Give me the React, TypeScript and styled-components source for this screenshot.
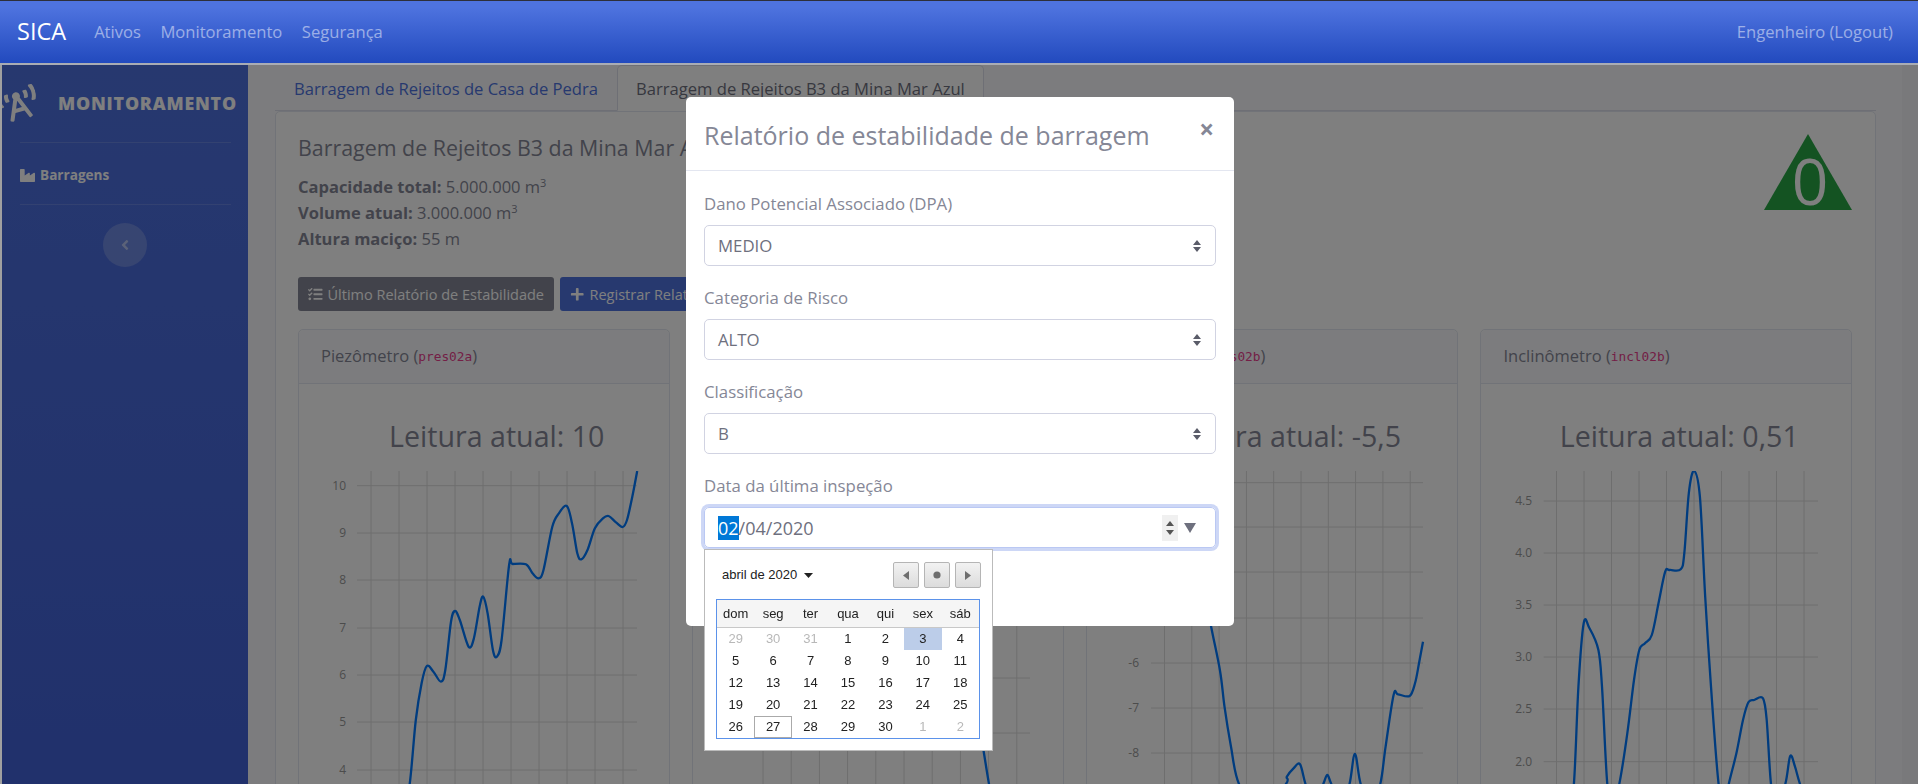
import React from "react";
import styled, { createGlobalStyle } from "styled-components";
import { FaAngleLeft, FaBroadcastTower, FaIndustry, FaPlus, FaTasks } from "react-icons/fa";

type Point = [number, number];

type ChartData = {
	lines: { y: number; label?: string }[];
	labelRight: number;
	lineStart: number;
	lineEnd: number;
	gridStart: number;
	gridStep: number;
	points: Point[];
};

type SensorData = {
	name: string;
	code: string;
	reading: string;
	chart: ChartData;
};

const sensors: SensorData[] = [
	{
		name: "Piezômetro",
		code: "pres02a",
		reading: "10",
		chart: {
			lines: [
				{ y: 14.7, label: "10" },
				{ y: 62, label: "9" },
				{ y: 109, label: "8" },
				{ y: 157, label: "7" },
				{ y: 204, label: "6" },
				{ y: 251, label: "5" },
				{ y: 299, label: "4" },
			],
			labelRight: 48,
			lineStart: 59,
			lineEnd: 339,
			gridStart: 73,
			gridStep: 28,
			points: [
				[105, 340], [111.7, 313], [117.8, 249], [123.6, 212.3], [128.8, 195], [135.4, 200.7], [142.9, 210.7],
				[147.3, 199], [153, 150.7], [157, 140], [161.8, 149], [170.6, 175.7], [175.9, 167.3], [181.6, 135.7],
				[185.2, 125.7], [189.6, 142.3], [194.9, 179], [198.8, 185.7], [203.6, 169], [211.1, 94], [214.6, 93],
				[227.9, 93.3], [234.5, 102.3], [240.6, 107.3], [245.5, 99], [254.3, 55.7], [260.9, 42.3], [268.8, 35],
				[274, 52.3], [279.3, 82.3], [283.3, 88.3], [289.5, 79], [296.9, 57.3], [304.9, 47.3], [310.6, 45],
				[318, 51.3], [324.7, 56], [329, 49], [334.3, 25.7], [339.2, 0],
			],
		},
	},
	{
		name: "Piezômetro",
		code: "pres02c",
		reading: "2,5",
		chart: {
			lines: [
				{ y: 42, label: "3" },
				{ y: 97, label: "2,5" },
				{ y: 152, label: "2" },
				{ y: 207, label: "1,5" },
				{ y: 262, label: "1" },
				{ y: 317 },
			],
			labelRight: 48,
			lineStart: 59,
			lineEnd: 338,
			gridStart: 71,
			gridStep: 28.2,
			points: [[270, 120], [285, 240], [291.6, 280], [297, 313], [303, 345]],
		},
	},
	{
		name: "Piezômetro",
		code: "pres02b",
		reading: "-5,5",
		chart: {
			lines: [
				{ y: 11.7, label: "-2" },
				{ y: 56, label: "-3" },
				{ y: 101, label: "-4" },
				{ y: 147, label: "-5" },
				{ y: 192, label: "-6" },
				{ y: 237, label: "-7" },
				{ y: 282, label: "-8" },
			],
			labelRight: 53,
			lineStart: 65,
			lineEnd: 337,
			gridStart: 78.5,
			gridStep: 27.3,
			points: [
				[115, 100], [125, 155], [134, 199.7], [138.5, 235.7], [145, 275.7], [153, 313], [175, 345], [200, 313],
				[200.8, 305.7], [207.5, 297.3], [214, 293.3], [219.5, 313], [228, 335], [237.3, 313], [241.3, 304],
				[245.3, 313], [255, 335], [263.5, 313], [268.9, 283], [274.7, 313], [285, 335], [294.3, 313], [299.6, 275.7],
				[307.6, 224], [312, 223.3], [323.6, 225], [329, 212.3], [333, 192.3], [337, 170.7],
			],
		},
	},
	{
		name: "Inclinômetro",
		code: "incl02b",
		reading: "0,51",
		chart: {
			lines: [
				{ y: 30, label: "4.5" },
				{ y: 82, label: "4.0" },
				{ y: 134, label: "3.5" },
				{ y: 186, label: "3.0" },
				{ y: 238, label: "2.5" },
				{ y: 290.7, label: "2.0" },
			],
			labelRight: 52,
			lineStart: 63.6,
			lineEnd: 338,
			gridStart: 76.5,
			gridStep: 27.5,
			points: [
				[88, 345], [93.9, 313], [98.4, 216], [103.7, 152.3], [109.5, 157.3], [118.4, 179], [122, 215.7], [127.3, 313],
				[133, 335], [139.3, 313], [147.3, 262.3], [154, 209], [159.3, 179], [165, 172.3], [171.8, 164], [178.5, 132.3],
				[185.2, 100.7], [189.6, 99], [200.7, 98.3], [204.3, 82.3], [208.8, 22.3], [214, 0], [219.9, 25.7], [225.2, 125.7],
				[231, 215.7], [238.6, 313], [245, 335], [248.8, 313], [256.4, 282.3], [263, 249], [268.4, 231.3], [274.2, 229],
				[283, 227.3], [286.7, 249], [291, 313], [296, 335], [305.3, 313], [310.2, 285], [315, 295.7], [320, 313], [330, 340],
			],
		},
	},
];

const selects = [
	{ label: "Dano Potencial Associado (DPA)", value: "MEDIO" },
	{ label: "Categoria de Risco", value: "ALTO" },
	{ label: "Classificação", value: "B" },
];

const weekDays = ["dom", "seg", "ter", "qua", "qui", "sex", "sáb"];

const weeks: { day: number; muted?: boolean; selected?: boolean; today?: boolean }[][] = [
	[{ day: 29, muted: true }, { day: 30, muted: true }, { day: 31, muted: true }, { day: 1 }, { day: 2 }, { day: 3, selected: true }, { day: 4 }],
	[{ day: 5 }, { day: 6 }, { day: 7 }, { day: 8 }, { day: 9 }, { day: 10 }, { day: 11 }],
	[{ day: 12 }, { day: 13 }, { day: 14 }, { day: 15 }, { day: 16 }, { day: 17 }, { day: 18 }],
	[{ day: 19 }, { day: 20 }, { day: 21 }, { day: 22 }, { day: 23 }, { day: 24 }, { day: 25 }],
	[{ day: 26 }, { day: 27, today: true }, { day: 28 }, { day: 29 }, { day: 30 }, { day: 1, muted: true }, { day: 2, muted: true }],
];

// catmull-rom through the readings so the line looks like the smoothed plot
function smoothPath(points: Point[]) {
	let d = `M${points[0][0]} ${points[0][1]}`;
	for (let i = 0; i < points.length - 1; i++) {
		const p0 = points[Math.max(i - 1, 0)];
		const p1 = points[i];
		const p2 = points[i + 1];
		const p3 = points[Math.min(i + 2, points.length - 1)];
		const c1x = p1[0] + (p2[0] - p0[0]) / 6;
		const c1y = p1[1] + (p2[1] - p0[1]) / 6;
		const c2x = p2[0] - (p3[0] - p1[0]) / 6;
		const c2y = p2[1] - (p3[1] - p1[1]) / 6;
		d += ` C${c1x.toFixed(1)} ${c1y.toFixed(1)} ${c2x.toFixed(1)} ${c2y.toFixed(1)} ${p2[0]} ${p2[1]}`;
	}
	return d;
}

function Chart({ chart }: { chart: ChartData }) {
	const verticals = Array.from({ length: 10 }, (_, i) => chart.gridStart + i * chart.gridStep);
	return (
		<ChartSvg viewBox="0 0 369 345">
			{verticals.map((x) => (
				<line key={x} x1={x} x2={x} y1={0} y2={345} stroke="#dcdcdc" />
			))}
			{chart.lines.map((line) => (
				<g key={line.y}>
					<line x1={chart.lineStart} x2={chart.lineEnd} y1={line.y} y2={line.y} stroke="#dcdcdc" />
					{line.label && (
						<text x={chart.labelRight} y={line.y + 4} textAnchor="end">
							{line.label}
						</text>
					)}
				</g>
			))}
			<path d={smoothPath(chart.points)} fill="none" stroke="#0078ff" strokeWidth="2.3" />
		</ChartSvg>
	);
}

function SensorCard({ sensor }: { sensor: SensorData }) {
	return (
		<Card>
			<CardHeader>
				{sensor.name} (<code>{sensor.code}</code>)
			</CardHeader>
			<CardBody>
				<Reading>Leitura atual: {sensor.reading}</Reading>
				<Chart chart={sensor.chart} />
			</CardBody>
		</Card>
	);
}

function Calendar() {
	return (
		<CalendarPopup>
			<CalendarTop>
				<MonthLabel>
					abril de 2020
					<svg width="9" height="5" viewBox="0 0 9 5">
						<path d="M0 0h9L4.500 5z" fill="#222" />
					</svg>
				</MonthLabel>
				<CalendarButtons>
					<CalendarButton>
						<svg width="6" height="9" viewBox="0 0 6 9">
							<path d="M6 0v9L0 4.500z" fill="#6e6e6e" />
						</svg>
					</CalendarButton>
					<CalendarButton>
						<svg width="8" height="8" viewBox="0 0 8 8">
							<circle cx="4" cy="4" r="3.600" fill="#6e6e6e" />
						</svg>
					</CalendarButton>
					<CalendarButton>
						<svg width="6" height="9" viewBox="0 0 6 9">
							<path d="M0 0v9l6-4.500z" fill="#6e6e6e" />
						</svg>
					</CalendarButton>
				</CalendarButtons>
			</CalendarTop>
			<CalendarTable>
				<thead>
					<tr>
						{weekDays.map((d) => (
							<th key={d}>{d}</th>
						))}
					</tr>
				</thead>
				<tbody>
					{weeks.map((week, i) => (
						<tr key={i}>
							{week.map((cell) => (
								<DayCell key={`${i}-${cell.day}`} $muted={cell.muted} $selected={cell.selected} $today={cell.today}>
									{cell.day}
								</DayCell>
							))}
						</tr>
					))}
				</tbody>
			</CalendarTable>
		</CalendarPopup>
	);
}

function App() {
	return (
		<>
			<GlobalStyle />
			<Navbar>
				<NavLeft>
					<Brand>SICA</Brand>
					<NavLinks>
						<NavLink>Ativos</NavLink>
						<NavLink>Monitoramento</NavLink>
						<NavLink>Segurança</NavLink>
					</NavLinks>
				</NavLeft>
				<NavLink>Engenheiro (Logout)</NavLink>
			</Navbar>
			<Shell>
				<Sidebar>
					<SidebarBrand>
						<BrandIcon>
							<FaBroadcastTower />
						</BrandIcon>
						<BrandText>Monitoramento</BrandText>
					</SidebarBrand>
					<SidebarDivider />
					<SidebarItem>
						<FaIndustry />
						Barragens
					</SidebarItem>
					<SidebarDivider />
					<SidebarToggle>
						<FaAngleLeft />
					</SidebarToggle>
				</Sidebar>
				<Main>
					<Tabs>
						<Tab>Barragem de Rejeitos de Casa de Pedra</Tab>
						<Tab $active>Barragem de Rejeitos B3 da Mina Mar Azul</Tab>
					</Tabs>
					<DamPanel>
						<DamHeader>
							<div>
								<DamTitle>Barragem de Rejeitos B3 da Mina Mar Azul</DamTitle>
								<DamInfo>
									<strong>Capacidade total:</strong> 5.000.000 m<sup>3</sup>
								</DamInfo>
								<DamInfo>
									<strong>Volume atual:</strong> 3.000.000 m<sup>3</sup>
								</DamInfo>
								<DamInfo>
									<strong>Altura maciço:</strong> 55 m
								</DamInfo>
							</div>
							<RiskTriangle>0</RiskTriangle>
						</DamHeader>
						<Actions>
							<ActionButton $variant="secondary">
								<FaTasks />
								Último Relatório de Estabilidade
							</ActionButton>
							<ActionButton $variant="primary">
								<FaPlus />
								Registrar Relatório de Estabilidade
							</ActionButton>
						</Actions>
						<SensorGrid>
							{sensors.map((sensor) => (
								<SensorCard key={sensor.code} sensor={sensor} />
							))}
						</SensorGrid>
					</DamPanel>
				</Main>
			</Shell>
			<Backdrop />
			<ModalLayer>
				<Modal>
					<ModalHeader>
						<ModalTitle>Relatório de estabilidade de barragem</ModalTitle>
						<CloseButton>×</CloseButton>
					</ModalHeader>
					<ModalBody>
						{selects.map((field) => (
							<FormGroup key={field.label}>
								<FieldLabel>{field.label}</FieldLabel>
								<FieldBox>
									{field.value}
									<svg width="8" height="12" viewBox="0 0 8 12">
										<path d="M4 0l4 5H0zM4 12L0 7h8z" fill="#5a5c69" />
									</svg>
								</FieldBox>
							</FormGroup>
						))}
						<DateGroup>
							<FieldLabel>Data da última inspeção</FieldLabel>
							<DateBox>
								<span>
									<DatePart>02</DatePart>/04/2020
								</span>
								<DateControls>
									<Spinner>
										<svg width="8" height="5" viewBox="0 0 8 5">
											<path d="M4 0l4 5H0z" fill="#555" />
										</svg>
										<svg width="8" height="5" viewBox="0 0 8 5">
											<path d="M0 0h8L4 5z" fill="#555" />
										</svg>
									</Spinner>
									<svg width="12" height="10" viewBox="0 0 12 10">
										<path d="M0 0h12L6 10z" fill="#6e707e" />
									</svg>
								</DateControls>
							</DateBox>
							<Calendar />
						</DateGroup>
					</ModalBody>
				</Modal>
			</ModalLayer>
		</>
	);
}

export default App;

const uiFont = `"Open Sans", "Noto Sans", sans-serif`;

const GlobalStyle = createGlobalStyle`
	html, body {
		margin: 0;
		height: 784px;
		overflow: hidden;
	}

	body {
		font-family: ${uiFont};
		font-size: 16.5px;
		line-height: 1.5;
		color: #858796;
		background: #fff;
	}

	* {
		box-sizing: border-box;
	}
`;

const Navbar = styled.nav`
	position: relative;
	z-index: 1060;
	display: flex;
	align-items: center;
	justify-content: space-between;
	height: 65px;
	padding: 0 25px 0 17px;
	border-top: 1px solid #2d2f3a;
	border-bottom: 2px solid #a9acb4;
	background: linear-gradient(180deg, #4e73df 10%, #224abe 100%);
`;

const NavLeft = styled.div`
	display: flex;
	align-items: center;
	gap: 28px;
`;

const Brand = styled.div`
	font-size: 23.5px;
	color: #fff;
`;

const NavLinks = styled.div`
	display: flex;
	gap: 19.5px;
`;

const NavLink = styled.a`
	font-size: 16.6px;
	color: rgba(255, 255, 255, 0.5);
`;

const Shell = styled.div`
	display: flex;
	height: 719px;
	padding-left: 2px;
	background: #a0a0a0;
`;

const Sidebar = styled.aside`
	flex: 0 0 246px;
	overflow: hidden;
	background: linear-gradient(180deg, #4e71df 0%, #4262d8 100%);
`;

const SidebarBrand = styled.div`
	display: flex;
	align-items: center;
	height: 77px;
`;

const BrandIcon = styled.div`
	display: flex;
	margin: 0 20px 0 -4px;
	font-size: 40px;
	color: #fff;
	transform: rotate(-15deg);
`;

const BrandText = styled.div`
	font-size: 17.8px;
	font-weight: 800;
	letter-spacing: 0.8px;
	text-transform: uppercase;
	color: #fff;
`;

const SidebarDivider = styled.hr`
	height: 1px;
	margin: 0 17px 0 18px;
	border: 0;
	background: rgba(255, 255, 255, 0.15);
`;

const SidebarItem = styled.a`
	display: flex;
	align-items: center;
	gap: 5px;
	height: 61px;
	padding: 4px 0 0 18px;
	font-size: 13.6px;
	font-weight: 700;
	color: #fff;

	svg {
		font-size: 15px;
		width: 15px;
	}
`;

const SidebarToggle = styled.button`
	display: flex;
	align-items: center;
	justify-content: center;
	width: 44px;
	height: 44px;
	margin: 18px auto 0 101px;
	border: 0;
	border-radius: 50%;
	font-size: 16px;
	color: rgba(255, 255, 255, 0.5);
	background: rgba(255, 255, 255, 0.2);
`;

const Main = styled.main`
	flex: 1;
	min-width: 0;
	padding: 0 26px 0 27px;
	background: #f8f9fc;
	border-right: 16px solid #f2f3f6;
`;

const Tabs = styled.div`
	display: flex;
	height: 46px;
	border-bottom: 1px solid #dddfeb;
`;

const Tab = styled.a<{ $active?: boolean }>`
	display: flex;
	align-items: center;
	padding: 2px 18px 0 18px;
	margin-bottom: -1px;
	font-size: 16.6px;
	color: ${(p) => (p.$active ? "#6e707e" : "#4e73df")};
	border: 1px solid ${(p) => (p.$active ? "#dddfeb" : "transparent")};
	border-bottom-color: ${(p) => (p.$active ? "#fff" : "transparent")};
	border-radius: 5px 5px 0 0;
	background: ${(p) => (p.$active ? "#fff" : "transparent")};
`;

const DamPanel = styled.section`
	padding: 22px 23px 0 22px;
	border: 1px solid #e3e6f0;
	border-radius: 5px;
	background: #fff;
`;

const DamHeader = styled.div`
	display: flex;
	justify-content: space-between;
	align-items: flex-start;
	height: 118px;
`;

const DamTitle = styled.h5`
	margin: 0 0 12px;
	font-size: 21.4px;
	font-weight: 400;
	line-height: 28px;
	white-space: nowrap;
`;

const DamInfo = styled.div`
	line-height: 26px;

	strong {
		font-weight: 700;
	}

	sup {
		font-size: 11px;
		line-height: 0;
	}
`;

const RiskTriangle = styled.div`
	display: flex;
	align-items: center;
	justify-content: center;
	width: 88px;
	height: 76px;
	padding: 17px 0 0 4px;
	font-size: 64px;
	line-height: 1;
	font-weight: 400;
	color: #fff;
	background: #28a745;
	clip-path: polygon(50% 0, 100% 100%, 0 100%);
`;

const Actions = styled.div`
	display: flex;
	gap: 6px;
	margin-top: 25px;
`;

const ActionButton = styled.button<{ $variant: "primary" | "secondary" }>`
	display: flex;
	align-items: center;
	flex: none;
	gap: 5px;
	height: 34px;
	padding: 0 10px;
	border: 0;
	border-radius: 3px;
	font-family: inherit;
	font-size: 14.5px;
	color: #fff;
	background: ${(p) => (p.$variant === "primary" ? "#4e73df" : "#858796")};
`;

const SensorGrid = styled.div`
	display: grid;
	grid-template-columns: repeat(4, 1fr);
	gap: 22.67px;
	margin-top: 18px;
`;

const Card = styled.article`
	min-width: 0;
	border: 1px solid #e3e6f0;
	border-radius: 5px;
`;

const CardHeader = styled.div`
	display: flex;
	align-items: center;
	height: 54px;
	padding-left: 22px;
	white-space: pre;
	border-bottom: 1px solid #e3e6f0;
	border-radius: 5px 5px 0 0;
	background: #f8f9fc;

	code {
		font-family: "DejaVu Sans Mono", monospace;
		font-size: 12.8px;
		color: #e83e8c;
	}
`;

const CardBody = styled.div`
	padding-top: 35px;
`;

const Reading = styled.h3`
	margin: 0 0 18px;
	padding-left: 26px;
	font-size: 28.6px;
	font-weight: 400;
	line-height: 34px;
	text-align: center;
`;

const ChartSvg = styled.svg`
	display: block;
	width: 369px;
	height: 345px;
	margin-left: -1px;

	text {
		font-family: ${uiFont};
		font-size: 12px;
		fill: #999;
	}
`;

const Backdrop = styled.div`
	position: fixed;
	top: 65px;
	left: 2px;
	right: 0;
	bottom: 0;
	z-index: 1040;
	background: rgba(0, 0, 0, 0.5);
`;

const ModalLayer = styled.div`
	position: fixed;
	inset: 0;
	z-index: 1050;
	display: flex;
	justify-content: center;
	padding: 97px 0 0 2px;
`;

const Modal = styled.div`
	width: 548px;
	height: 529px;
	border-radius: 5px;
	background: #fff;
`;

const ModalHeader = styled.div`
	display: flex;
	align-items: flex-start;
	justify-content: space-between;
	height: 74px;
	padding: 20px 20px 0 18px;
	border-bottom: 1px solid #e3e6f0;
`;

const ModalTitle = styled.h5`
	margin: 0;
	font-size: 25px;
	font-weight: 400;
	line-height: 36px;
`;

const CloseButton = styled.span`
	font-size: 26px;
	font-weight: 700;
	line-height: 24px;
	color: #858796;
`;

const ModalBody = styled.div`
	padding: 21px 18px 0;
`;

const FormGroup = styled.div`
	margin-bottom: 20px;
`;

const DateGroup = styled.div`
	position: relative;
`;

const FieldLabel = styled.label`
	display: block;
	margin-bottom: 9px;
	font-size: 16.8px;
	line-height: 24px;
`;

const FieldBox = styled.div`
	display: flex;
	align-items: center;
	justify-content: space-between;
	height: 41px;
	padding: 0 14px 0 13px;
	border: 1px solid #d1d3e2;
	border-radius: 5px;
	font-size: 16.8px;
	color: #6e707e;
`;

const DateBox = styled(FieldBox)`
	padding: 1px 19px 0 13px;
	border-color: #bac8f3;
	box-shadow: 0 0 0 3px #cdd7f6;
	font-size: 18px;
`;

const DatePart = styled.span`
	color: #fff;
	background: #0078d7;
`;

const DateControls = styled.div`
	display: flex;
	align-items: center;
	gap: 6px;
`;

const Spinner = styled.div`
	display: flex;
	flex-direction: column;
	align-items: center;
	justify-content: center;
	gap: 4px;
	width: 16px;
	height: 26px;
	background: #f0f0f0;
`;

const CalendarPopup = styled.div`
	position: absolute;
	top: 75px;
	left: 0;
	width: 289px;
	height: 202px;
	padding: 12px 11px 0;
	border: 1px solid #bbb;
	background: #fff;
	font-family: "Liberation Sans", Arial, sans-serif;
	font-size: 13px;
	color: #222;
`;

const CalendarTop = styled.div`
	display: flex;
	align-items: center;
	justify-content: space-between;
	height: 26px;
	padding: 0 0 0 6px;
`;

const MonthLabel = styled.div`
	display: flex;
	align-items: center;
	gap: 7px;
	font-size: 13px;
`;

const CalendarButtons = styled.div`
	display: flex;
	gap: 5px;
`;

const CalendarButton = styled.div`
	display: flex;
	align-items: center;
	justify-content: center;
	width: 26px;
	height: 26px;
	border: 1px solid #b5b5b5;
	border-radius: 2px;
	background: linear-gradient(180deg, #f2f2f2, #dcdcdc);
`;

const CalendarTable = styled.table`
	width: 264px;
	margin-top: 11px;
	border: 1px solid #5b92ea;
	border-spacing: 0;
	table-layout: fixed;
	text-align: center;

	th {
		height: 28px;
		padding: 0;
		font-weight: 400;
		border-bottom: 1px solid #c8c8c8;
		background: #f5f5f5;
	}
`;

const DayCell = styled.td<{ $muted?: boolean; $selected?: boolean; $today?: boolean }>`
	height: 22px;
	padding: 0;
	color: ${(p) => (p.$muted ? "#b8b8b8" : "#222")};
	background: ${(p) => (p.$selected ? "#bccde9" : "transparent")};
	outline: ${(p) => (p.$today ? "1px solid #aaa" : "none")};
	outline-offset: -1px;
`;
